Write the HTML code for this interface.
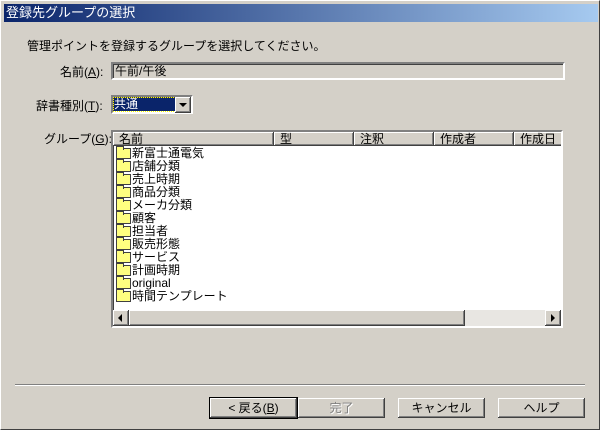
<html><head><style>
body{margin:0;width:600px;height:430px;background:#d4d0c8;font-family:"Liberation Sans","Noto Sans CJK JP",sans-serif;font-size:12px;position:relative;overflow:hidden}
.a{position:absolute;white-space:nowrap}
.sunk{border:2px solid;border-color:#808080 #fff #fff #808080;box-shadow:inset 1px 1px 0 #404040}
.btn{position:absolute;top:398px;height:20px;width:87px;text-align:center;line-height:20px;background:#d4d0c8;box-shadow:inset -1px -1px 0 #404040,inset 1px 1px 0 #fff,inset -2px -2px 0 #808080}
.hd{position:absolute;top:0;height:14px;line-height:14px;background:#d4d0c8;box-shadow:inset -1px -1px 0 #404040,inset 1px 1px 0 #fff,inset -2px -2px 0 #808080;padding-left:6px;box-sizing:border-box}
.row{height:13px;line-height:13px;display:flex;align-items:center}
.f{width:15px;height:11px;background:#ffff80;border:1px solid #404040;box-sizing:border-box;margin:0 1px 0 3px;position:relative}
.f:before{content:"";position:absolute;left:-1px;top:-3px;width:6px;height:3px;border:1px solid #404040;border-bottom:0;background:#ffff80}
</style></head><body>
<div class="a" style="left:4px;top:4px;width:592px;height:18px;background:linear-gradient(90deg,#0a246a,#a6caf0);color:#fff;font-size:13px;line-height:18px;padding-left:2px">登録先グループの選択</div>
<div class="a" style="left:27px;top:37px">管理ポイントを登録するグループを選択してください。</div>
<div class="a" style="left:60px;top:63px">名前(<u>A</u>):</div>
<div class="a sunk" style="left:111px;top:62px;width:448px;height:14px;line-height:14px;padding-left:2px">午前/午後</div>
<div class="a" style="left:36px;top:97px">辞書種別(<u>T</u>):</div>
<div class="a sunk" style="left:111px;top:95px;width:78px;height:15px;background:#fff"></div>
<div class="a" style="left:114px;top:98px;width:61px;height:13px;background:#0a246a;color:#fff;line-height:13px;outline:1px dotted #ff0">共通</div>
<div class="a" style="left:175px;top:97px;width:16px;height:16px;background:#d4d0c8;box-shadow:inset -1px -1px 0 #404040,inset 1px 1px 0 #fff,inset -2px -2px 0 #808080"><div style="position:absolute;left:4px;top:6px;border:4px solid transparent;border-top:4px solid #000;border-bottom:0"></div></div>
<div class="a" style="left:44px;top:130px">グループ(<u>G</u>):</div>
<div class="a sunk" style="left:111px;top:130px;width:448px;height:194px;background:#fff;overflow:hidden">
<div class="hd" style="left:0;width:161px">名前</div>
<div class="hd" style="left:161px;width:80px">型</div>
<div class="hd" style="left:241px;width:80px">注釈</div>
<div class="hd" style="left:321px;width:80px">作成者</div>
<div class="hd" style="left:401px;width:60px">作成日</div>
<div style="position:absolute;top:15px;left:0">
<div class="row"><span class="f"></span>新富士通電気</div>
<div class="row"><span class="f"></span>店舗分類</div>
<div class="row"><span class="f"></span>売上時期</div>
<div class="row"><span class="f"></span>商品分類</div>
<div class="row"><span class="f"></span>メーカ分類</div>
<div class="row"><span class="f"></span>顧客</div>
<div class="row"><span class="f"></span>担当者</div>
<div class="row"><span class="f"></span>販売形態</div>
<div class="row"><span class="f"></span>サービス</div>
<div class="row"><span class="f"></span>計画時期</div>
<div class="row"><span class="f"></span>original</div>
<div class="row"><span class="f"></span>時間テンプレート</div>
</div>
<div style="position:absolute;left:0;top:178px;width:448px;height:16px;background:#e8e6e2"></div>
<div class="hd" style="top:178px;left:0;width:16px;height:16px"><div style="position:absolute;left:5px;top:4px;border:4px solid transparent;border-right:4px solid #000;border-left:0"></div></div>
<div class="hd" style="top:178px;left:16px;width:336px;height:16px"></div>
<div class="hd" style="top:178px;left:432px;width:16px;height:16px"><div style="position:absolute;left:6px;top:4px;border:4px solid transparent;border-left:4px solid #000;border-right:0"></div></div>
</div>
<div class="a" style="left:15px;top:384px;width:570px;height:1px;background:#808080;border-bottom:1px solid #fff"></div>
<div class="btn" style="left:210px;box-shadow:0 0 0 1px #000,inset -1px -1px 0 #404040,inset 1px 1px 0 #fff,inset -2px -2px 0 #808080">&lt; 戻る(<u>B</u>)</div>
<div class="btn" style="left:298px;color:#808080;text-shadow:1px 1px 0 #fff">完了</div>
<div class="btn" style="left:398px">キャンセル</div>
<div class="btn" style="left:498px">ヘルプ</div>
<div class="a" style="left:0;top:0;width:598px;height:428px;border:1px solid;border-color:#fff #404040 #404040 #fff"></div>
</body></html>
